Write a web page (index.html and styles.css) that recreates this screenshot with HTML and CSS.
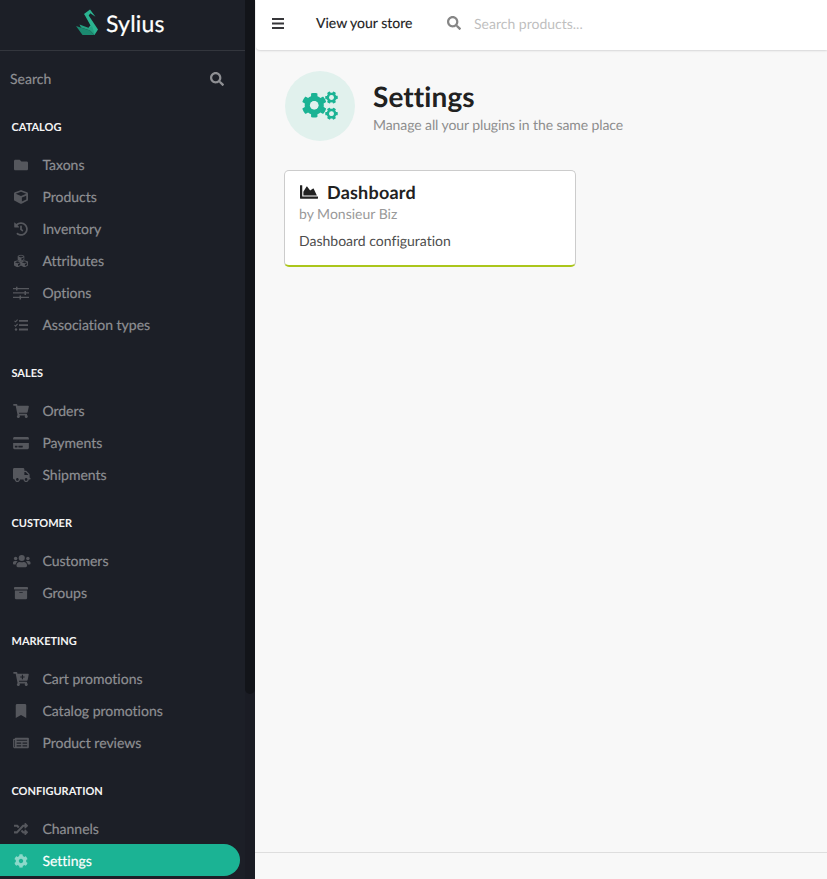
FILE: index.html
```html
<!DOCTYPE html>
<html lang="en">
<head>
<meta charset="utf-8">
<title>Settings</title>
<link rel="stylesheet" href="styles.css">
</head>
<body>
<svg class="defs" aria-hidden="true">
  <symbol id="search" viewBox="0 0 512 512"><path d="M505 442.7L405.3 343c-4.5-4.5-10.6-7-17-7H372c27.6-35.3 44-79.7 44-128C416 93.1 322.9 0 208 0S0 93.1 0 208s93.1 208 208 208c48.3 0 92.7-16.4 128-44v16.3c0 6.4 2.5 12.5 7 17l99.7 99.7c9.4 9.4 24.6 9.4 33.9 0l28.3-28.3c9.4-9.4 9.4-24.6.1-34zM208 336c-70.7 0-128-57.2-128-128 0-70.7 57.2-128 128-128 70.7 0 128 57.2 128 128 0 70.7-57.2 128-128 128z"/></symbol>
  <symbol id="cube" viewBox="0 0 512 512"><path d="M239.1 6.3l-208 78c-18.7 7-31.1 25-31.1 45v225.1c0 18.2 10.3 34.8 26.5 42.9l208 104c13.5 6.8 29.4 6.8 42.9 0l208-104c16.3-8.1 26.5-24.8 26.5-42.9V129.3c0-20-12.4-37.9-31.1-44.9l-208-78C262 2.2 250 2.2 239.1 6.3zM256 68.4l192 72v1.1l-192 78-192-78v-1.1l192-72zm32 356V275.5l160-65v133.9l-160 80z"/></symbol>
  <symbol id="cog" viewBox="0 0 512 512"><path d="M487.4 315.7l-42.6-24.6c4.3-23.2 4.3-47 0-70.2l42.6-24.6c4.9-2.8 7.1-8.6 5.5-14-11.1-35.6-30-67.8-54.7-94.6-3.8-4.1-10-5.1-14.8-2.3L380.8 110c-17.9-15.4-38.5-27.3-60.8-35.1V25.8c0-5.6-3.9-10.5-9.4-11.7-36.7-8.2-74.3-7.8-109.2 0-5.5 1.2-9.4 6.1-9.4 11.7V75c-22.2 7.9-42.8 19.8-60.8 35.1L88.7 85.5c-4.9-2.8-11-1.9-14.8 2.3-24.7 26.7-43.6 58.9-54.7 94.6-1.7 5.4.6 11.2 5.5 14L67.3 221c-4.3 23.2-4.3 47 0 70.2l-42.6 24.6c-4.9 2.8-7.1 8.6-5.5 14 11.1 35.6 30 67.8 54.7 94.6 3.8 4.1 10 5.1 14.8 2.3l42.6-24.6c17.9 15.4 38.5 27.3 60.8 35.1v49.2c0 5.6 3.9 10.5 9.4 11.7 36.7 8.2 74.3 7.8 109.2 0 5.5-1.2 9.4-6.1 9.4-11.7v-49.2c22.2-7.9 42.8-19.8 60.8-35.1l42.6 24.6c4.9 2.8 11 1.9 14.8-2.3 24.7-26.7 43.6-58.9 54.7-94.6 1.5-5.5-.7-11.3-5.6-14.1zM256 336c-44.1 0-80-35.9-80-80s35.9-80 80-80 80 35.9 80 80-35.9 80-80 80z"/></symbol>
  <symbol id="cart" viewBox="0 0 576 512"><path d="M528.12 301.319l47.273-208C578.806 78.301 567.391 64 551.99 64H159.208l-9.166-44.81C147.758 8.021 137.93 0 126.529 0H24C10.745 0 0 10.745 0 24v16c0 13.255 10.745 24 24 24h69.883l70.248 343.435C147.325 417.1 136 435.222 136 456c0 30.928 25.072 56 56 56s56-25.072 56-56c0-15.674-6.447-29.835-16.824-40h209.647C430.447 426.165 424 440.326 424 456c0 30.928 25.072 56 56 56s56-25.072 56-56c0-22.172-12.888-41.332-31.579-50.405l5.517-24.276c3.413-15.018-8.002-29.319-23.403-29.319H218.117l-6.545-32h293.145c11.206 0 20.92-7.754 23.403-18.681z"/></symbol>
</svg>

<div class="app">
  <aside class="sidebar">
    <nav class="menu">
      <div class="brand">
        <svg class="swan" viewBox="0 0 24 28">
          <path fill="#2bb491" d="M8 5L14 .5 19.500 7.800 14.300 4.300 12.700 6.500 22 20.500 18.500 26 12.500 18.500 14.500 16.500 9 6.500z"/>
          <path fill="#1b8a70" d="M0 17L14 21.500 18.500 26H6.500z"/>
          <path fill="#24a282" d="M3.500 15.500L13 19 16 17 19 26 14 21.500 5 18.500z"/>
        </svg>
        <span class="wordmark">Sylius</span>
      </div>
      <div class="menu-search"><span>Search</span><svg class="glyph"><use href="#search"/></svg></div>

      <h2>Catalog</h2>
      <a class="item"><svg class="icon" viewBox="0 0 512 512"><path d="M464 128H272l-64-64H48C21.49 64 0 85.49 0 112v288c0 26.51 21.49 48 48 48h416c26.51 0 48-21.49 48-48V176c0-26.51-21.49-48-48-48z"/></svg>Taxons</a>
      <a class="item"><svg class="icon"><use href="#cube"/></svg>Products</a>
      <a class="item"><svg class="icon" viewBox="0 0 512 512"><path d="M504 255.531c.253 136.64-111.18 248.372-247.82 248.468-59.015.042-113.223-20.53-155.822-54.911-11.077-8.94-11.905-25.541-1.839-35.607l11.267-11.267c8.609-8.609 22.353-9.551 31.891-1.984C173.062 425.135 212.781 440 256 440c101.705 0 184-82.311 184-184 0-101.705-82.311-184-184-184-48.814 0-93.149 18.969-126.068 49.932l50.754 50.754c10.08 10.08 2.941 27.314-11.313 27.314H24c-8.837 0-16-7.163-16-16V38.627c0-14.254 17.234-21.393 27.314-11.314l49.372 49.372C129.209 34.136 189.552 8 256 8c136.81 0 247.747 110.78 248 247.531zm-180.912 78.784l9.823-12.63c8.138-10.463 6.253-25.542-4.21-33.679L288 256.349V152c0-13.255-10.745-24-24-24h-16c-13.255 0-24 10.745-24 24v135.651l65.409 50.874c10.463 8.137 25.541 6.253 33.679-4.21z"/></svg>Inventory</a>
      <a class="item"><svg class="icon" viewBox="0 0 512 512"><use href="#cube" x="126" y="20" width="260" height="260"/><use href="#cube" x="0" y="226" width="260" height="260"/><use href="#cube" x="252" y="226" width="260" height="260"/></svg>Attributes</a>
      <a class="item"><svg class="icon wide" viewBox="0 0 16 14"><path d="M0 2h3V.7h1.500V2H16v1.300H4.500v1.200H3V3.300H0zM0 6.300h11.500V5H13v1.300h3v1.300h-3v1.300h-1.500V7.600H0zM0 10.700h6.500V9.500H8v1.200h8V12H8v1.400H6.500V12H0z"/></svg>Options</a>
      <a class="item"><svg class="icon" viewBox="0 0 14 14"><path d="M5 2h9v1.800H5zM5 6.300h9v1.800H5zM5 10.600h9v1.800H5z"/><path class="line" d="M.5 2.800l1.100 1L3.600 1.600M.5 7.100l1.100 1L3.600 5.900"/><circle cx="2" cy="11.500" r="1.200"/></svg>Association types</a>

      <h2>Sales</h2>
      <a class="item"><svg class="icon wide"><use href="#cart"/></svg>Orders</a>
      <a class="item"><svg class="icon wide" viewBox="0 0 576 512"><path d="M0 432c0 26.5 21.5 48 48 48h480c26.5 0 48-21.5 48-48V256H0v176zm192-68c0-6.6 5.4-12 12-12h136c6.6 0 12 5.4 12 12v40c0 6.6-5.4 12-12 12H204c-6.600 0-12-5.400-12-12v-40zm-128 0c0-6.600 5.400-12 12-12h72c6.600 0 12 5.400 12 12v40c0 6.600-5.400 12-12 12H76c-6.600 0-12-5.400-12-12v-40zM576 80v48H0V80c0-26.500 21.500-48 48-48h480c26.500 0 48 21.500 48 48z"/></svg>Payments</a>
      <a class="item"><svg class="icon extra" viewBox="0 0 640 512"><path d="M624 352h-16V243.9c0-12.7-5.1-24.9-14.1-33.9L494 110.1c-9-9-21.2-14.1-33.9-14.1H416V48c0-26.5-21.5-48-48-48H48C21.5 0 0 21.5 0 48v320c0 26.5 21.5 48 48 48h16c0 53 43 96 96 96s96-43 96-96h128c0 53 43 96 96 96s96-43 96-96h48c8.8 0 16-7.2 16-16v-32c0-8.8-7.2-16-16-16zM160 464c-26.5 0-48-21.5-48-48s21.5-48 48-48 48 21.5 48 48-21.5 48-48 48zm320 0c-26.5 0-48-21.5-48-48s21.5-48 48-48 48 21.5 48 48-21.5 48-48 48zm80-208H416V144h44.1l99.9 99.9V256z"/></svg>Shipments</a>

      <h2>Customer</h2>
      <a class="item"><svg class="icon extra" viewBox="0 0 640 512"><circle cx="96" cy="160" r="64"/><circle cx="544" cy="160" r="64"/><circle cx="320" cy="144" r="112"/><path d="M0 320c0-35 29-64 64-64h64c18 0 34 7 45 19-40 22-69 62-75 109H32c-18 0-32-14-32-32zM640 320c0-35-29-64-64-64h-64c-18 0-34 7-45 19 40 22 69 62 75 109h66c18 0 32-14 32-32zM128 403c0-64 52-115 115-115 24 0 40 16 77 16s53-16 77-16c63 0 115 51 115 115v29c0 26-22 48-48 48H176c-26 0-48-22-48-48z"/></svg>Customers</a>
      <a class="item"><svg class="icon" viewBox="0 0 512 512"><path d="M32 448c0 17.7 14.3 32 32 32h384c17.7 0 32-14.3 32-32V160H32v288zm160-212c0-6.6 5.4-12 12-12h104c6.6 0 12 5.4 12 12v8c0 6.6-5.4 12-12 12H204c-6.6 0-12-5.4-12-12v-8zM480 32H32C14.3 32 0 46.3 0 64v48c0 8.8 7.2 16 16 16h480c8.8 0 16-7.2 16-16V64c0-17.7-14.3-32-32-32z"/></svg>Groups</a>

      <h2>Marketing</h2>
      <a class="item"><svg class="icon wide" viewBox="0 0 576 512"><use href="#cart"/><path class="cut" d="M320 104h40v60h60v40h-60v64h-40v-64h-60v-40h60z"/></svg>Cart promotions</a>
      <a class="item"><svg class="icon" viewBox="0 0 512 512"><path d="M64 512V48C64 21.490 85.490 0 112 0h288c26.510 0 48 21.490 48 48v464L256 400z"/></svg>Catalog promotions</a>
      <a class="item"><svg class="icon wide" viewBox="0 0 576 512"><path fill-rule="evenodd" d="M552 64H88c-14 0-24 10-24 24v8H24c-13 0-24 11-24 24v272c0 31 25 56 56 56h472c26 0 48-22 48-48V88c0-13-11-24-24-24zM40 392V144h24v248c0 20-24 20-24 0zM128 140h384v36H128zM128 236h168v44H128zM344 236h168v44H344zM128 340h168v44H128zM344 340h168v44H344z"/></svg>Product reviews</a>

      <h2>Configuration</h2>
      <a class="item"><svg class="icon" viewBox="0 0 512 512"><path d="M504.971 359.029c9.373 9.373 9.373 24.569 0 33.941l-80 79.984c-15.01 15.01-40.971 4.49-40.971-16.971V416h-58.785a12.004 12.004 0 0 1-8.773-3.812l-70.556-75.596 53.333-57.143L352 336h32v-39.981c0-21.438 25.943-31.998 40.971-16.971l80 79.981zM12 176h84l52.781 56.551 53.333-57.143-70.556-75.596A11.999 11.999 0 0 0 122.785 96H12c-6.627 0-12 5.373-12 12v56c0 6.627 5.373 12 12 12zm372 0v39.984c0 21.460 25.961 31.980 40.971 16.971l80-79.984c9.373-9.373 9.373-24.569 0-33.941l-80-79.981C409.943 24.021 384 34.582 384 56.019V96h-58.785a12.004 12.004 0 0 0-8.773 3.812L96 336H12c-6.627 0-12 5.373-12 12v56c0 6.627 5.373 12 12 12h110.785c3.326 0 6.503-1.381 8.773-3.812L352 176h32z"/></svg>Channels</a>
      <a class="item active"><svg class="icon"><use href="#cog"/></svg>Settings</a>
    </nav>
    <div class="track"><div class="thumb"></div></div>
  </aside>

  <main class="main">
    <header class="topbar">
      <svg class="bars" viewBox="0 0 12 11"><path d="M0 0h12v2H0zM0 4.500h12v2H0zM0 9h12v2H0z"/></svg>
      <a class="store">View your store</a>
      <svg class="glyph"><use href="#search"/></svg>
      <span class="placeholder">Search products...</span>
    </header>
    <section class="content">
      <div class="heading">
        <div class="round">
          <svg class="gears" viewBox="0 0 36 30"><use href="#cog" x="-.5" y="1.500" width="25.500" height="25.500"/><g transform="rotate(30 29.500 6.500)"><use href="#cog" x="23" y="0" width="13" height="13"/></g><g transform="rotate(30 29.500 22.700)"><use href="#cog" x="23" y="16.200" width="13" height="13"/></g><g class="hole"><circle cx="12.250" cy="14.250" r="4.300"/><circle cx="29.500" cy="6.500" r="2.400"/><circle cx="29.500" cy="22.700" r="2.400"/></g></svg>
        </div>
        <div>
          <h1>Settings</h1>
          <p>Manage all your plugins in the same place</p>
        </div>
      </div>
      <article class="card">
        <h3><svg class="chart" viewBox="0 0 512 512"><path d="M500 384c6.600 0 12 5.400 12 12v40c0 6.600-5.400 12-12 12H12c-6.600 0-12-5.400-12-12V76c0-6.600 5.400-12 12-12h40c6.600 0 12 5.400 12 12v308h436zM372.700 159.500L288 216l-85.300-113.700c-5.100-6.800-15.500-6.300-19.900 1L96 248v104h384l-89.900-187.800c-3.200-6.500-11.400-8.700-17.400-4.700z"/></svg>Dashboard</h3>
        <div class="meta">by Monsieur Biz</div>
        <div class="desc">Dashboard configuration</div>
      </article>
    </section>
    <footer class="footer"></footer>
  </main>
</div>
</body>
</html>
```
FILE: styles.css
```css
* { box-sizing: border-box; }
html, body { margin: 0; height: 100%; overflow: hidden; }
body { font: 14px/20px Lato, "Liberation Sans", sans-serif; font-variant-ligatures: none; text-rendering: geometricPrecision; background: #f8f8f8; color: #212121; }
h1, h2, h3, p { margin: 0; }
svg { display: block; fill: currentColor; flex: none; }
.defs { position: absolute; width: 0; height: 0; }
.app { display: flex; height: 879px; }

.sidebar { display: flex; width: 255px; flex: none; background: #1c1f27; overflow: hidden; }
.menu { width: 245px; -webkit-text-stroke: .2px; }
.brand { display: flex; height: 51px; padding: 9px 0 0 76px; border-bottom: 1px solid #33363d; color: #fff; }
.swan { width: 24px; height: 28px; }
.wordmark { margin-left: 6px; font-size: 23px; line-height: 29px; letter-spacing: .2px; }
.menu-search { display: flex; align-items: center; justify-content: space-between; height: 43px; padding: 13px 21px 0 10px; color: #8e8f93; }
.glyph { width: 14px; height: 14px; }
.menu h2 { height: 54px; padding: 23px 0 0 11.500px; font-size: 11px; line-height: 22px; font-weight: 700; text-transform: uppercase; color: #f4f4f4; -webkit-text-stroke: 0; }
.item { display: flex; align-items: center; width: 240px; height: 32px; padding: 1px 0 0 14.400px; color: #8e8f93; border-radius: 0 16px 16px 0; white-space: nowrap; }
.icon { width: 14px; height: 14px; margin-right: 14px; color: #55575d; }
.icon.wide { width: 16px; margin-left: -1px; margin-right: 13px; }
.icon.extra { width: 17.500px; margin-left: -1px; margin-right: 11.500px; }
.line { fill: none; stroke: currentColor; stroke-width: 1.100; }
.cut { fill: #1c1f27; }
.active { background: #1bb394; color: #fff; }
.active .icon { color: #8dd9ca; }
.track { width: 10px; background: #1a1c24; }
.thumb { height: 694px; background: #121419; border-radius: 0 0 5px 5px; }

.main { display: flex; flex-direction: column; flex: 1; min-width: 0; }
.topbar { display: flex; align-items: center; height: 50px; padding: 0 0 4px 16px; margin-left: 1px; background: #fff; border-radius: 0 0 0 4px; box-shadow: 0 1px 2px rgba(34, 36, 38, .15); }
.bars { width: 12px; height: 11px; color: #37373a; }
.store { width: 131px; margin-left: 32px; color: #212121; -webkit-text-stroke: .15px; }
.topbar .glyph { color: #868686; }
.placeholder { margin-left: 13px; padding-top: 2px; color: #bfbfbf; }
.content { flex: 1; padding: 21px 29px 0; }
.heading { display: flex; gap: 18px; margin-left: 1px; }
.round { display: grid; place-items: center; width: 70px; height: 70px; border-radius: 50%; background: #e1f1ed; color: #1bb394; }
.gears { width: 36px; height: 30px; overflow: visible; }
.hole { fill: #e1f1ed; }
.heading h1 { padding-top: 8px; font-size: 28px; line-height: 35px; font-weight: 700; letter-spacing: .1px; color: #212121; }
.heading p { margin-top: 1px; letter-spacing: -.09px; color: #8d8d8d; }
.card { width: 292px; height: 97px; margin-top: 29px; padding: 10px 14px; background: #fff; border: 1px solid #ccc; border-bottom: 2px solid #abc61b; border-radius: 5px; }
.card h3 { display: flex; align-items: center; height: 23px; padding-bottom: 2px; font-size: 18px; letter-spacing: .2px; color: #212121; }
.chart { width: 18px; height: 18px; margin: 0 9px 0 1px; }
.meta { color: #999; }
.desc { margin-top: 7px; color: #4d4d4d; }
.footer { height: 27px; border-top: 1px solid #dedede; }
```
